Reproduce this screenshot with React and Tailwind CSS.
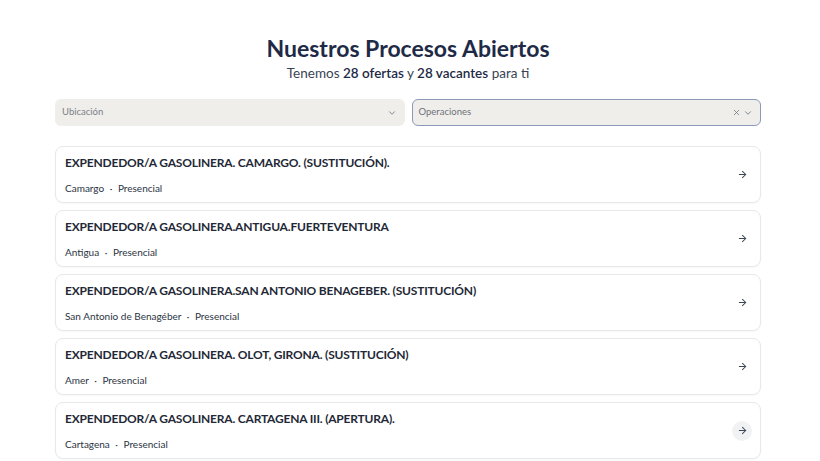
import { ChevronDown, X, ArrowRight } from "lucide-react";

const jobs = [
  { title: "EXPENDEDOR/A GASOLINERA. CAMARGO. (SUSTITUCIÓN).", place: "Camargo" },
  { title: "EXPENDEDOR/A GASOLINERA.ANTIGUA.FUERTEVENTURA", place: "Antigua" },
  { title: "EXPENDEDOR/A GASOLINERA.SAN ANTONIO BENAGEBER. (SUSTITUCIÓN)", place: "San Antonio de Benagéber" },
  { title: "EXPENDEDOR/A GASOLINERA. OLOT, GIRONA. (SUSTITUCIÓN)", place: "Amer" },
  { title: "EXPENDEDOR/A GASOLINERA. CARTAGENA III. (APERTURA).", place: "Cartagena", hover: true },
];

// Single job row
function JobCard({ job }) {
  return (
    <div className="flex items-center justify-between bg-white border border-[#e6e8ec] rounded-lg h-[57px] pl-[9px] pr-[8px] shadow-[0_1px_2px_rgba(0,0,0,0.03)]">
      <div className="flex flex-col">
        <span className="text-[12px] font-bold text-[#1f2937] leading-none tracking-[-0.2px]">{job.title}</span>
        <span className="mt-[14px] text-[10px] text-[#2b3442] leading-none">
          {job.place} <span className="mx-[3px]">·</span> Presencial
        </span>
      </div>
      <div className={`w-[20px] h-[20px] rounded-full flex items-center justify-center ${job.hover ? "bg-[#f1f2f4]" : ""}`}>
        <ArrowRight size={11} strokeWidth={2.2} className="text-[#3f4754]" />
      </div>
    </div>
  );
}

export default function App() {
  return (
    <div className="min-h-screen bg-white font-['Lato','Noto_Sans',sans-serif]">
      <div className="w-[706px] ml-[55px] pt-[34px]">
        <h1 className="text-center text-[23px] font-bold text-[#1e2a46] leading-[28px]">Nuestros Procesos Abiertos</h1>
        <p className="text-center text-[13.5px] text-[#3a4353] mt-[2px] leading-[18px]">
          Tenemos <span className="font-semibold text-[#1e2a46]">28 ofertas</span> y{" "}
          <span className="font-semibold text-[#1e2a46]">28 vacantes</span> para ti
        </p>

        <div className="flex gap-[7px] mt-[17px]">
          <div className="flex-1 h-[27px] bg-[#efeeea] rounded-md flex items-center justify-between pl-[7px] pr-[8px]">
            <span className="text-[9.5px] text-[#7d8088]">Ubicación</span>
            <ChevronDown size={10} className="text-[#6b7280]" />
          </div>
          <div className="flex-1 h-[27px] bg-[#efeeea] rounded-md border border-[#8a9ab8] flex items-center justify-between pl-[6px] pr-[7px]">
            <span className="text-[9.5px] text-[#6e7179]">Operaciones</span>
            <div className="flex items-center gap-[2px] text-[#6b7280]">
              <X size={9} />
              <ChevronDown size={10} />
            </div>
          </div>
        </div>

        <div className="flex flex-col gap-[7px] mt-[20px]">
          {jobs.map((job, i) => (
            <JobCard key={i} job={job} />
          ))}
        </div>
      </div>
    </div>
  );
}
